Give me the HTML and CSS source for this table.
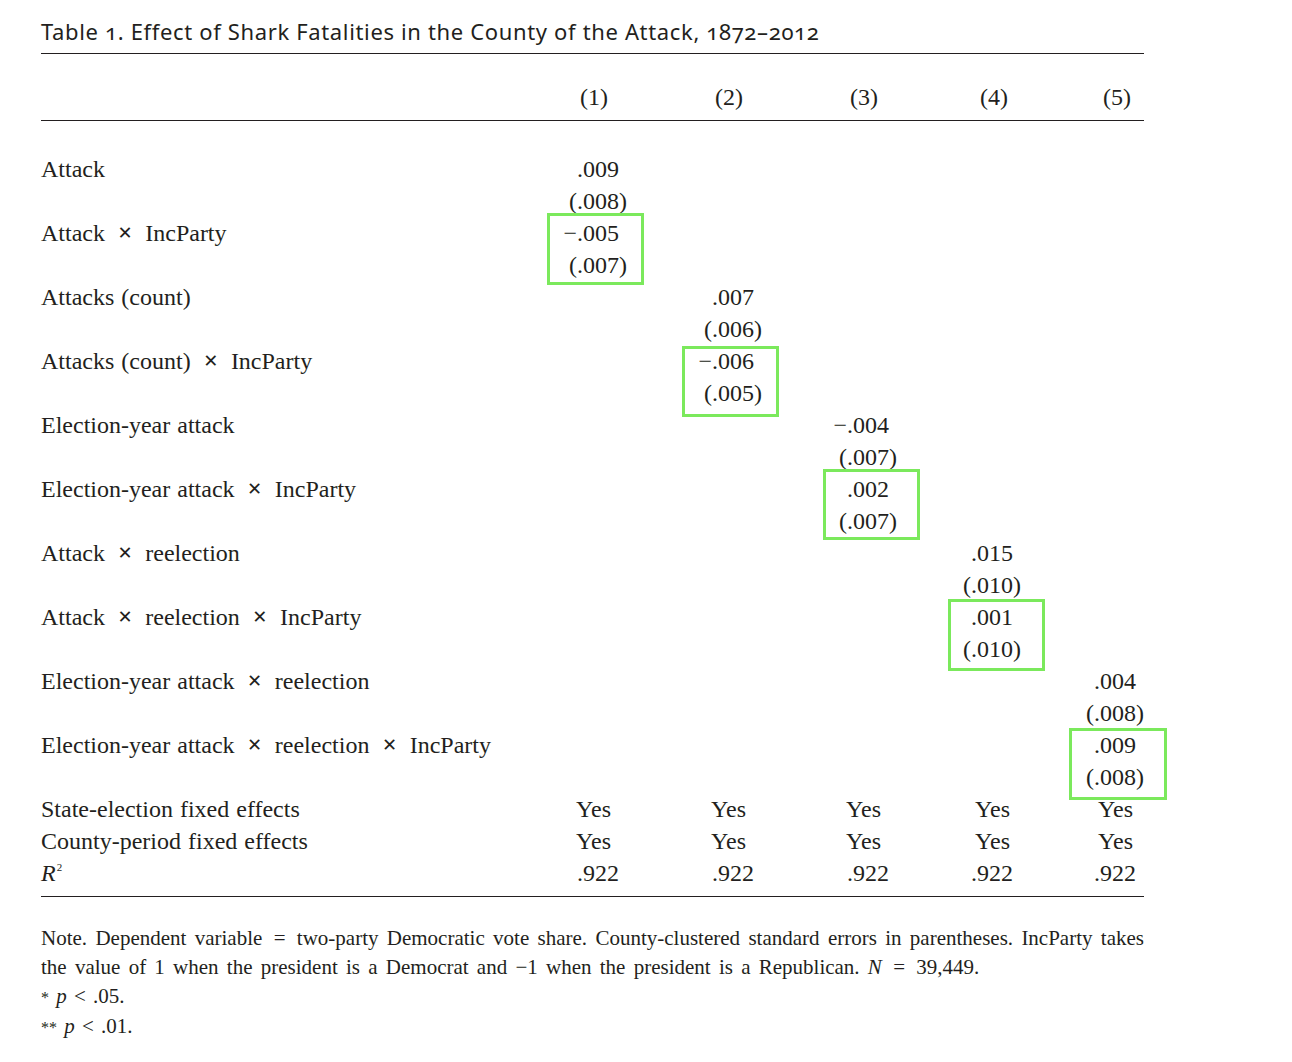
FILE: index.html
```html
<!DOCTYPE html>
<html lang="en">
<head>
<meta charset="utf-8">
<title>Table 1. Effect of Shark Fatalities</title>
<link rel="stylesheet" href="styles.css">
</head>
<body>
<main class="page">
  <h1 class="caption">Table 1. Effect of Shark Fatalities in the County of the Attack, 1872–2012</h1>
  <div class="table">
    <div class="row head">
      <div class="label"></div>
      <div class="cell hd c1">(1)</div>
      <div class="cell hd c2">(2)</div>
      <div class="cell hd c3">(3)</div>
      <div class="cell hd c4">(4)</div>
      <div class="cell hd c5">(5)</div>
    </div>
    <div class="body">
      <div class="row"><div class="label">Attack</div><div class="cell num c1">.009</div></div>
      <div class="row"><div class="label"></div><div class="cell se c1">(.008)</div></div>
      <div class="row"><div class="label">Attack <span class="op">×</span> IncParty</div><div class="cell num c1">−.005<span class="box box-1"></span></div></div>
      <div class="row"><div class="label"></div><div class="cell se c1">(.007)</div></div>

      <div class="row"><div class="label">Attacks (count)</div><div class="cell num c2">.007</div></div>
      <div class="row"><div class="label"></div><div class="cell se c2">(.006)</div></div>
      <div class="row"><div class="label">Attacks (count) <span class="op">×</span> IncParty</div><div class="cell num c2">−.006<span class="box box-2"></span></div></div>
      <div class="row"><div class="label"></div><div class="cell se c2">(.005)</div></div>

      <div class="row"><div class="label">Election-year attack</div><div class="cell num c3">−.004</div></div>
      <div class="row"><div class="label"></div><div class="cell se c3">(.007)</div></div>
      <div class="row"><div class="label">Election-year attack <span class="op">×</span> IncParty</div><div class="cell num c3">.002<span class="box box-3"></span></div></div>
      <div class="row"><div class="label"></div><div class="cell se c3">(.007)</div></div>

      <div class="row"><div class="label">Attack <span class="op">×</span> reelection</div><div class="cell num c4">.015</div></div>
      <div class="row"><div class="label"></div><div class="cell se c4">(.010)</div></div>
      <div class="row"><div class="label">Attack <span class="op">×</span> reelection <span class="op">×</span> IncParty</div><div class="cell num c4">.001<span class="box box-4"></span></div></div>
      <div class="row"><div class="label"></div><div class="cell se c4">(.010)</div></div>

      <div class="row"><div class="label">Election-year attack <span class="op">×</span> reelection</div><div class="cell num c5">.004</div></div>
      <div class="row"><div class="label"></div><div class="cell se c5">(.008)</div></div>
      <div class="row"><div class="label">Election-year attack <span class="op">×</span> reelection <span class="op">×</span> IncParty</div><div class="cell num c5">.009<span class="box box-5"></span></div></div>
      <div class="row"><div class="label"></div><div class="cell se c5">(.008)</div></div>

      <div class="row">
        <div class="label">State-election fixed effects</div>
        <div class="cell yes c1">Yes</div><div class="cell yes c2">Yes</div><div class="cell yes c3">Yes</div><div class="cell yes c4">Yes</div><div class="cell yes c5">Yes</div>
      </div>
      <div class="row">
        <div class="label">County-period fixed effects</div>
        <div class="cell yes c1">Yes</div><div class="cell yes c2">Yes</div><div class="cell yes c3">Yes</div><div class="cell yes c4">Yes</div><div class="cell yes c5">Yes</div>
      </div>
      <div class="row">
        <div class="label"><i>R</i><sup class="sq">2</sup></div>
        <div class="cell num c1">.922</div><div class="cell num c2">.922</div><div class="cell num c3">.922</div><div class="cell num c4">.922</div><div class="cell num c5">.922</div>
      </div>
    </div>
  </div>
  <div class="note">
    <p class="note-main"><span class="line line-first">Note. Dependent variable <span class="eq">=</span> two-party Democratic vote share. County-clustered standard errors in parentheses. IncParty takes</span> <span class="line line-rest">the value of 1 when the president is a Democrat and −1 when the president is a Republican. <i>N</i> <span class="eq">=</span> 39,449.</span></p>
    <p class="sig"><span class="star">*</span> <i>p</i> <span class="lt">&lt;</span> .05.</p>
    <p class="sig"><span class="star">**</span> <i>p</i> <span class="lt">&lt;</span> .01.</p>
  </div>
</main>
</body>
</html>
```
FILE: styles.css
```css
html, body {
  margin: 0;
  background: #ffffff;
}

body {
  color: #231f20;
}

.page {
  width: 1103px;
  padding: 16px 0 0 41px;
}

.caption {
  margin: 0 0 7px;
  font-family: "Noto Sans", "Open Sans", sans-serif;
  font-weight: 400;
  font-size: 22px;
  line-height: 30px;
  letter-spacing: 0.65px;
  font-variant-numeric: oldstyle-nums;
  white-space: nowrap;
}

.table {
  border-top: 1px solid #231f20;
  border-bottom: 1px solid #231f20;
  font-family: "Liberation Serif", "Times New Roman", serif;
  font-size: 24px;
}

.row {
  display: grid;
  grid-template-columns: 521px 65px 135px 135px 124px 123px;
  height: 32px;
  line-height: 32px;
}

.head {
  padding: 27px 0 7px;
  border-bottom: 1px solid #231f20;
}

.body {
  padding: 32px 0 7px;
}

.label {
  grid-column: 1;
  white-space: nowrap;
  word-spacing: 1px;
}

.op {
  display: inline-block;
  margin: 0 6px;
  font-size: 25px;
  font-weight: 700;
  line-height: 20px;
}

.sq {
  font-size: 11px;
  vertical-align: 0;
  position: relative;
  top: -10px;
  margin-left: 1px;
}

.cell {
  position: relative;
  text-align: right;
  white-space: nowrap;
}

.c1 { grid-column: 2; }
.c2 { grid-column: 3; }
.c3 { grid-column: 4; }
.c4 { grid-column: 5; }
.c5 { grid-column: 6; }

.num { padding-right: 8px; }
.se { padding-right: 0; }

.yes { padding-right: 16px; }
.yes.c4, .yes.c5 { padding-right: 11px; }

.hd { padding-right: 19px; }
.hd.c4, .hd.c5 { padding-right: 13px; }

.box {
  position: absolute;
  box-sizing: border-box;
  width: 97px;
  height: 72px;
  border: 3px solid #7be95c;
}

.box-1 { top: -4px; right: -17px; }
.box-2 { top: 1px; right: -17px; height: 71px; }
.box-3 { top: -4px; right: -23px; height: 71px; }
.box-4 { top: -2px; right: -24px; }
.box-5 { top: -1px; right: -23px; width: 98px; }

.note {
  margin-top: 27px;
  font-family: "Liberation Serif", "Times New Roman", serif;
  font-size: 21px;
  line-height: 29px;
}

.note p {
  margin: 0;
}

.line {
  display: block;
}

.line-first {
  text-align: justify;
  text-align-last: justify;
}

.line-rest {
  word-spacing: 3px;
}

.eq {
  margin: 0 3px;
}

.lt {
  margin: 0 2px;
}

.star {
  font-size: 16px;
  margin-right: 2px;
}
```
